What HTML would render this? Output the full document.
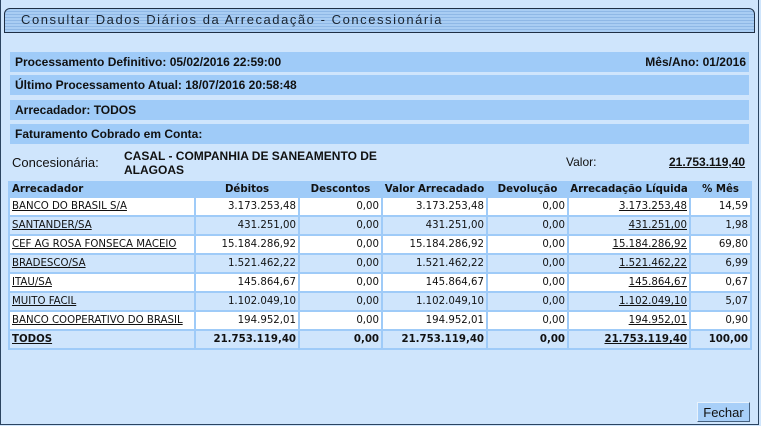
<!DOCTYPE html>
<html><head><meta charset="utf-8"><style>
*{margin:0;padding:0;box-sizing:border-box}
body{width:761px;height:426px;background:#cfe5fc;position:relative;overflow:hidden;font-family:"Liberation Sans",Arial,sans-serif}
.frame{position:absolute;left:0;top:0;width:759px;height:425px;border:1px solid #2c4460;border-top:none}
.tab{position:absolute;left:4px;top:8px;width:751px;height:25px;border:1px solid #1e2f45;border-radius:6px 6px 0 0;
background:repeating-linear-gradient(to bottom,#a9cdf3 0,#a9cdf3 2px,#8fb8e6 2px,#8fb8e6 3px);}
.tab span{position:absolute;left:16px;top:3px;font-size:13px;letter-spacing:1.55px;color:#1a2430}
.bar{position:absolute;left:10px;width:739px;height:20px;background:#9fcbf8;font-size:12px;font-weight:bold;color:#111;padding:3px 0 0 5px}
.bar b.r{position:absolute;right:3px;top:3px}
.lbl{position:absolute;font-size:12px;font-weight:bold;color:#111}
table{position:absolute;left:8px;top:181px;width:744px;table-layout:fixed;border-collapse:separate;border-spacing:2px;background:#9fcbf8;font-family:"DejaVu Sans",Verdana,sans-serif;font-size:10.2px;color:#111}
td,th{height:17px;padding:0 2px;white-space:nowrap;overflow:hidden}
th{background:#9fcbf8;font-weight:bold;height:13px;text-align:center;padding:0}
th:first-child{text-align:left;padding-left:2px}
td{text-align:right}
td:first-child{text-align:left}
tr.w td{background:#fff}
tr.l td{background:#cfe5fc}
a{color:#111;text-decoration:underline}
tr.t td{font-weight:bold;background:#cfe5fc}
.btn{position:absolute;left:697px;top:402px;width:53px;height:20px;background:#a8cff8;border:1px solid #44607f;border-top-color:#e8f2fc;border-left-color:#e8f2fc;font-size:13px;text-align:center;padding-top:2px;color:#111}
</style></head><body>
<div class="frame"></div>
<div class="tab"><span>Consultar Dados Diários da Arrecadação - Concessionária</span></div>
<div class="bar" style="top:52px">Processamento Definitivo: 05/02/2016 22:59:00<b class="r">Mês/Ano: 01/2016</b></div>
<div class="bar" style="top:75px">Último Processamento Atual: 18/07/2016 20:58:48</div>
<div class="bar" style="top:100px">Arrecadador: TODOS</div>
<div class="bar" style="top:124px">Faturamento Cobrado em Conta:</div>
<div class="lbl" style="left:12px;top:155px;font-weight:normal;font-size:13px">Concesionária:</div>
<div class="lbl" style="left:124px;top:149px;line-height:14px">CASAL - COMPANHIA DE SANEAMENTO DE<br>ALAGOAS</div>
<div class="lbl" style="left:566px;top:155px;font-weight:normal">Valor:</div>
<div class="lbl" style="left:669px;top:155px;text-decoration:underline">21.753.119,40</div>
<table>
<colgroup><col style="width:184px"><col style="width:102px"><col style="width:81px"><col style="width:103px"><col style="width:79px"><col style="width:120px"><col style="width:59px"></colgroup>
<tr><th>Arrecadador</th><th>Débitos</th><th>Descontos</th><th>Valor Arrecadado</th><th>Devolução</th><th>Arrecadação Líquida</th><th>% Mês</th></tr>
<tr class="w"><td><a>BANCO DO BRASIL S/A</a></td><td>3.173.253,48</td><td>0,00</td><td>3.173.253,48</td><td>0,00</td><td><a>3.173.253,48</a></td><td>14,59</td></tr>
<tr class="l"><td><a>SANTANDER/SA</a></td><td>431.251,00</td><td>0,00</td><td>431.251,00</td><td>0,00</td><td><a>431.251,00</a></td><td>1,98</td></tr>
<tr class="w"><td><a>CEF AG ROSA FONSECA MACEIO</a></td><td>15.184.286,92</td><td>0,00</td><td>15.184.286,92</td><td>0,00</td><td><a>15.184.286,92</a></td><td>69,80</td></tr>
<tr class="l"><td><a>BRADESCO/SA</a></td><td>1.521.462,22</td><td>0,00</td><td>1.521.462,22</td><td>0,00</td><td><a>1.521.462,22</a></td><td>6,99</td></tr>
<tr class="w"><td><a>ITAU/SA</a></td><td>145.864,67</td><td>0,00</td><td>145.864,67</td><td>0,00</td><td><a>145.864,67</a></td><td>0,67</td></tr>
<tr class="l"><td><a>MUITO FACIL</a></td><td>1.102.049,10</td><td>0,00</td><td>1.102.049,10</td><td>0,00</td><td><a>1.102.049,10</a></td><td>5,07</td></tr>
<tr class="w"><td><a>BANCO COOPERATIVO DO BRASIL</a></td><td>194.952,01</td><td>0,00</td><td>194.952,01</td><td>0,00</td><td><a>194.952,01</a></td><td>0,90</td></tr>
<tr class="t"><td><a>TODOS</a></td><td>21.753.119,40</td><td>0,00</td><td>21.753.119,40</td><td>0,00</td><td><a>21.753.119,40</a></td><td>100,00</td></tr>
</table>
<div class="btn">Fechar</div>
</body></html>
